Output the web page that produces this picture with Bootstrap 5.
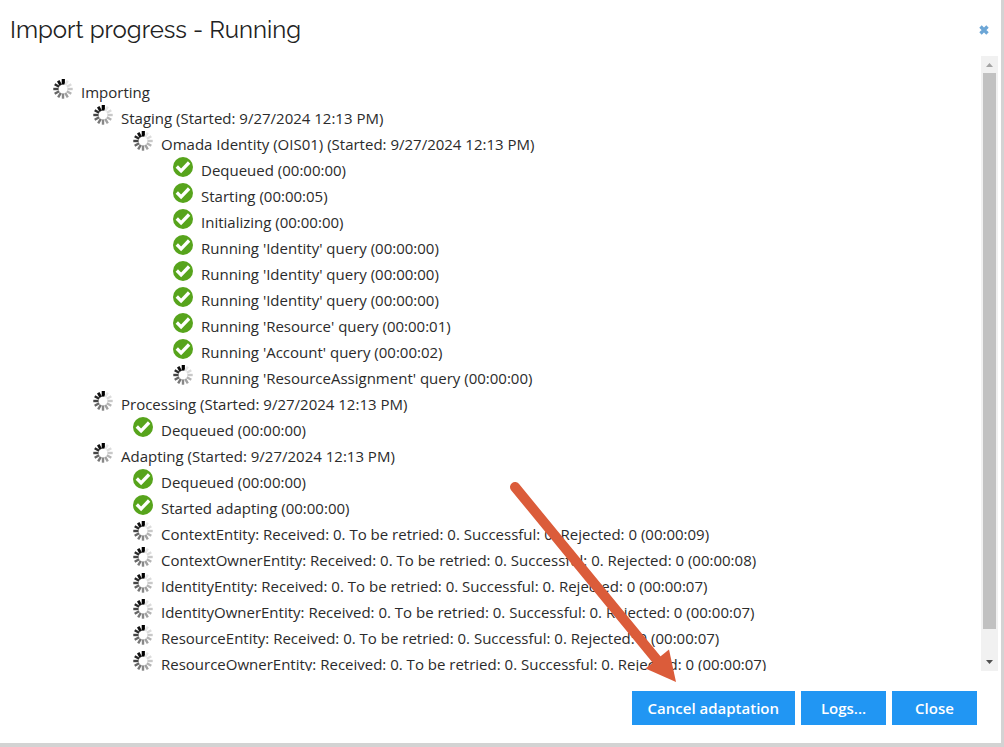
<!DOCTYPE html>
<html lang="en">
<head>
<meta charset="utf-8">
<meta name="viewport" content="width=device-width, initial-scale=1">
<title>Import progress - Running</title>
<link href="https://cdn.jsdelivr.net/npm/bootstrap@5.3.0/dist/css/bootstrap.min.css" rel="stylesheet">
<style>
  body { font-family: "Open Sans", sans-serif; font-size: 15px; line-height: 26px; color: #2b2b2b; }
  .dialog-frame { border: solid #d3d3d3; border-width: 0 3px 4px 0; }
  .dialog-head { height: 56px; padding: 4px 9px 0 10px; }
  .dialog-title { font-family: Raleway, Lato, sans-serif; font-weight: 400; font-size: 24px; line-height: 32px; color: #222; }
  .close-x { width: 16px; height: 16px; }
  .scroll-area { min-height: 0; padding-right: 3px; }
  .tree { padding: 23px 0 0 53px; }
  .tree ul { padding-left: 40px; }
  .step { gap: 8px; height: 26px; white-space: nowrap; }
  .step svg { width: 20px; height: 20px; flex: none; }
  .track { width: 17px; background: #f1f1f1; }
  .track svg { width: 17px; height: 17px; flex: none; }
  .thumb { background: #c1c1c1; margin: 0 2px; flex: 556 1 0; }
  .track-rest { flex: 25 1 0; }
  .dialog-foot { gap: 6px; padding: 20px 24px 18px; }
  .btn-flat { --bs-btn-bg: #2196f3; --bs-btn-color: #fff; --bs-btn-hover-bg: #1b86dc; --bs-btn-hover-color: #fff;
    --bs-btn-border-width: 0; --bs-btn-border-radius: 0; --bs-btn-padding-y: 4px; --bs-btn-padding-x: 16px;
    --bs-btn-font-size: 15px; --bs-btn-line-height: 26px; --bs-btn-font-weight: 600; min-width: 85px; }
  .pointer-arrow { left: 500px; top: 470px; pointer-events: none; }
</style>
</head>
<body>
<svg class="d-none" aria-hidden="true">
  <symbol id="busy" viewBox="0 0 20 20">
    <g stroke-width="2.4">
      <path stroke="#000" stroke-width="3.2" d="M10.300 5.600V0"/>
      <path stroke="#111" stroke-width="2.8" d="M7.8 6.2 5.2 1.7"/>
      <path stroke="#2a2a2a" d="M6.2 7.8 1.7 5.2"/>
      <path stroke="#444" d="M5.6 10H.3"/>
      <path stroke="#666" d="M6.2 12.2 1.7 14.8"/>
      <path stroke="#777" d="M7.8 13.8 5.2 18.3"/>
      <path stroke="#888" d="M10 14.4v5.3"/>
      <path stroke="#a0a0a0" d="m12.2 13.8 2.6 4.5"/>
      <path stroke="#b4b4b4" d="m13.8 12.2 4.5 2.6"/>
      <path stroke="#c8c8c8" d="M14.4 10h5.3"/>
      <path stroke="#dcdcdc" d="m13.8 7.8 4.5-2.6"/>
      <path stroke="#e6e6e6" d="m12.2 6.2 2.6-4.5"/>
    </g>
  </symbol>
  <symbol id="done" viewBox="0 0 20 20">
    <circle cx="10" cy="10" r="10" fill="#57a41c"/>
    <path d="m3.800 9.500 4.300 4.300 8-8.300" fill="none" stroke="#fff" stroke-width="3.300"/>
  </symbol>
</svg>

<main class="dialog-frame vh-100 d-flex flex-column position-relative bg-white overflow-hidden">
  <header class="dialog-head d-flex align-items-center justify-content-between flex-shrink-0">
    <h1 class="dialog-title m-0">Import progress - Running</h1>
    <button type="button" class="btn p-0 border-0 d-flex" aria-label="Close dialog">
      <svg class="close-x" viewBox="0 0 16 16"><path d="m4.500 4.500 7 7m0-7-7 7" stroke="#6ca6d6" stroke-width="3.400"/></svg>
    </button>
  </header>

  <section class="scroll-area d-flex flex-fill">
    <div class="flex-fill overflow-hidden">
      <ul class="tree list-unstyled m-0">
        <li><div class="step d-flex"><svg><use href="#busy"/></svg><span>Importing</span></div>
          <ul class="list-unstyled">
            <li><div class="step d-flex"><svg><use href="#busy"/></svg><span>Staging (Started: 9/27/2024 12:13 PM)</span></div>
              <ul class="list-unstyled">
                <li><div class="step d-flex"><svg><use href="#busy"/></svg><span>Omada Identity (OIS01) (Started: 9/27/2024 12:13 PM)</span></div>
                  <ul class="list-unstyled">
                    <li class="step d-flex"><svg><use href="#done"/></svg><span>Dequeued (00:00:00)</span></li>
                    <li class="step d-flex"><svg><use href="#done"/></svg><span>Starting (00:00:05)</span></li>
                    <li class="step d-flex"><svg><use href="#done"/></svg><span>Initializing (00:00:00)</span></li>
                    <li class="step d-flex"><svg><use href="#done"/></svg><span>Running 'Identity' query (00:00:00)</span></li>
                    <li class="step d-flex"><svg><use href="#done"/></svg><span>Running 'Identity' query (00:00:00)</span></li>
                    <li class="step d-flex"><svg><use href="#done"/></svg><span>Running 'Identity' query (00:00:00)</span></li>
                    <li class="step d-flex"><svg><use href="#done"/></svg><span>Running 'Resource' query (00:00:01)</span></li>
                    <li class="step d-flex"><svg><use href="#done"/></svg><span>Running 'Account' query (00:00:02)</span></li>
                    <li class="step d-flex"><svg><use href="#busy"/></svg><span>Running 'ResourceAssignment' query (00:00:00)</span></li>
                  </ul>
                </li>
              </ul>
            </li>
            <li><div class="step d-flex"><svg><use href="#busy"/></svg><span>Processing (Started: 9/27/2024 12:13 PM)</span></div>
              <ul class="list-unstyled">
                <li class="step d-flex"><svg><use href="#done"/></svg><span>Dequeued (00:00:00)</span></li>
              </ul>
            </li>
            <li><div class="step d-flex"><svg><use href="#busy"/></svg><span>Adapting (Started: 9/27/2024 12:13 PM)</span></div>
              <ul class="list-unstyled">
                <li class="step d-flex"><svg><use href="#done"/></svg><span>Dequeued (00:00:00)</span></li>
                <li class="step d-flex"><svg><use href="#done"/></svg><span>Started adapting (00:00:00)</span></li>
                <li class="step d-flex"><svg><use href="#busy"/></svg><span>ContextEntity: Received: 0. To be retried: 0. Successful: 0. Rejected: 0 (00:00:09)</span></li>
                <li class="step d-flex"><svg><use href="#busy"/></svg><span>ContextOwnerEntity: Received: 0. To be retried: 0. Successful: 0. Rejected: 0 (00:00:08)</span></li>
                <li class="step d-flex"><svg><use href="#busy"/></svg><span>IdentityEntity: Received: 0. To be retried: 0. Successful: 0. Rejected: 0 (00:00:07)</span></li>
                <li class="step d-flex"><svg><use href="#busy"/></svg><span>IdentityOwnerEntity: Received: 0. To be retried: 0. Successful: 0. Rejected: 0 (00:00:07)</span></li>
                <li class="step d-flex"><svg><use href="#busy"/></svg><span>ResourceEntity: Received: 0. To be retried: 0. Successful: 0. Rejected: 0 (00:00:07)</span></li>
                <li class="step d-flex"><svg><use href="#busy"/></svg><span>ResourceOwnerEntity: Received: 0. To be retried: 0. Successful: 0. Rejected: 0 (00:00:07)</span></li>
              </ul>
            </li>
          </ul>
        </li>
      </ul>
    </div>
    <div class="track d-flex flex-column flex-shrink-0" aria-hidden="true">
      <svg viewBox="0 0 17 17"><path d="M5 11h7L8.500 7z" fill="#a3a3a3"/></svg>
      <div class="thumb"></div>
      <div class="track-rest"></div>
      <svg viewBox="0 0 17 17"><path d="M5 6h7l-3.500 4z" fill="#505050"/></svg>
    </div>
  </section>

  <footer class="dialog-foot d-flex justify-content-end flex-shrink-0">
    <button type="button" class="btn btn-flat">Cancel adaptation</button>
    <button type="button" class="btn btn-flat">Logs...</button>
    <button type="button" class="btn btn-flat">Close</button>
  </footer>

  <svg class="pointer-arrow position-absolute" width="200" height="220" viewBox="0 0 200 220" aria-hidden="true">
    <path d="m15 17 142 173" stroke="#db5c3a" stroke-width="10" stroke-linecap="round"/>
    <path d="m145.500 198.500 23.500-19 7 32.500z" fill="#db5c3a"/>
  </svg>
</main>
<script src="https://cdn.jsdelivr.net/npm/bootstrap@5.3.0/dist/js/bootstrap.bundle.min.js"></script>
</body>
</html>
